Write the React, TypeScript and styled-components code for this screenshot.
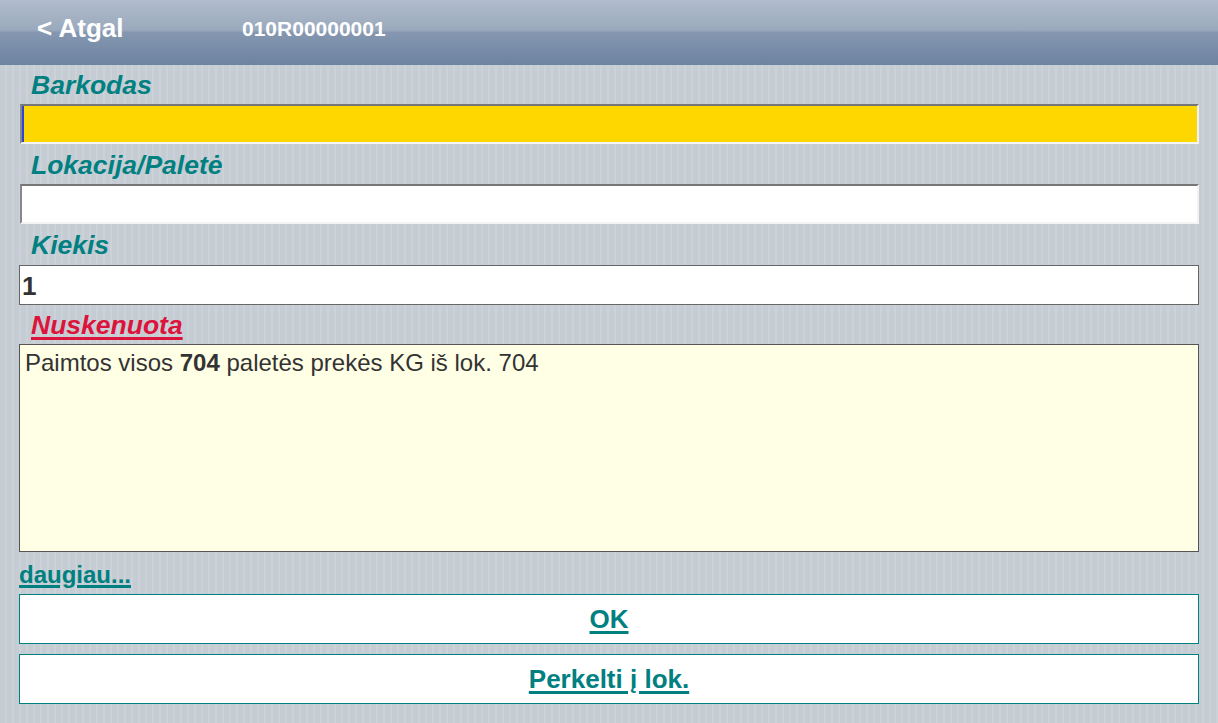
import React from "react";
import styled, { createGlobalStyle } from "styled-components";

const GlobalStyle = createGlobalStyle`
  html, body {
    margin: 0;
    padding: 0;
  }
  body {
    min-height: 100vh;
    font-family: "Liberation Sans", Arial, sans-serif;
    background: repeating-linear-gradient(
      90deg,
      #c5ccd4 0px,
      #c5ccd4 5px,
      #cbd2d8 5px,
      #cbd2d8 7px
    );
  }
`;

const App = () => {
  return (
    <>
      <GlobalStyle />
      <Toolbar>
        <BackLink>&lt; Atgal</BackLink>
        <DocNo>010R00000001</DocNo>
      </Toolbar>
      <Form>
        <Label $h={39}>Barkodas</Label>
        <Field $focused readOnly value="" />
        <Label>Lokacija/Paletė</Label>
        <Field readOnly value="" />
        <Label>Kiekis</Label>
        <Qty readOnly value="1" />
        <Label $h={39} $alert>
          Nuskenuota
        </Label>
        <Scanned>
          Paimtos visos <b>704</b> paletės prekės KG iš lok. 704
        </Scanned>
        <More>daugiau...</More>
        <Actions>
          <Action>OK</Action>
          <Action>Perkelti į lok.</Action>
        </Actions>
      </Form>
    </>
  );
};

export default App;

const Toolbar = styled.div`
  height: 65px;
  box-sizing: border-box;
  padding: 0 0 8px 37px;
  display: flex;
  align-items: center;
  background: linear-gradient(
    #b1bccc 0%,
    #9aa9bd 46%,
    #8597b0 50%,
    #6d83a1 100%
  );
  color: #fff;
  font-weight: bold;
`;
const BackLink = styled.div`
  font-size: 26px;
  width: 205px;
`;
const DocNo = styled.div`
  font-size: 21px;
`;
const Form = styled.div`
  padding: 0 19px 19px 19px;
  display: flex;
  flex-direction: column;
`;
const Label = styled.div<{ $alert?: boolean; $h?: number }>`
  height: ${(p) => p.$h ?? 40}px;
  line-height: ${(p) => (p.$h ?? 40) + 2}px;
  padding-left: 12px;
  font-size: 26.5px;
  font-weight: bold;
  font-style: italic;
  color: ${(p) => (p.$alert ? "#dc143c" : "#008080")};
  text-decoration: ${(p) => (p.$alert ? "underline" : "none")};
  text-underline-offset: 3px;
  text-decoration-thickness: 3px;
`;
const Field = styled.input<{ $focused?: boolean }>`
  display: block;
  height: 40px;
  box-sizing: border-box;
  margin: 0 0 0 1px;
  padding: 0 4px;
  border-style: solid;
  border-width: 2px;
  border-color: #777 #f2f2f2 #f4f4f4 #888;
  background: ${(p) => (p.$focused ? "#ffd700" : "#fff")};
  box-shadow: ${(p) => (p.$focused ? "inset 2px 0 0 #2a44e0" : "none")};
  font-family: "Liberation Sans", Arial, sans-serif;
  font-size: 24px;
  outline: none;
`;
const Qty = styled.input`
  display: block;
  height: 40px;
  box-sizing: border-box;
  margin: 1px 0 0 0;
  padding: 2px 2px 0 2px;
  border: 1px solid #666;
  background: #fff;
  font-family: "Liberation Sans", Arial, sans-serif;
  font-size: 26px;
  font-weight: bold;
  color: #333;
  outline: none;
`;
const Scanned = styled.div`
  height: 208px;
  box-sizing: border-box;
  padding: 4px 5px;
  border: 1px solid #555;
  background: #ffffe6;
  color: #333;
  font-size: 24px;
  line-height: 28px;
`;
const More = styled.div`
  height: 42px;
  line-height: 46px;
  font-size: 24px;
  font-weight: bold;
  color: #008080;
  text-decoration: underline;
  text-decoration-thickness: 3px;
  text-underline-offset: 2px;
`;
const Actions = styled.div`
  display: flex;
  flex-direction: column;
  gap: 10px;
`;
const Action = styled.button`
  height: 50px;
  border: 1px solid #008080;
  background: #fff;
  font-family: "Liberation Sans", Arial, sans-serif;
  font-size: 26px;
  font-weight: bold;
  color: #008080;
  text-decoration: underline;
  text-decoration-thickness: 3px;
  text-underline-offset: 3px;
  cursor: pointer;
`;
